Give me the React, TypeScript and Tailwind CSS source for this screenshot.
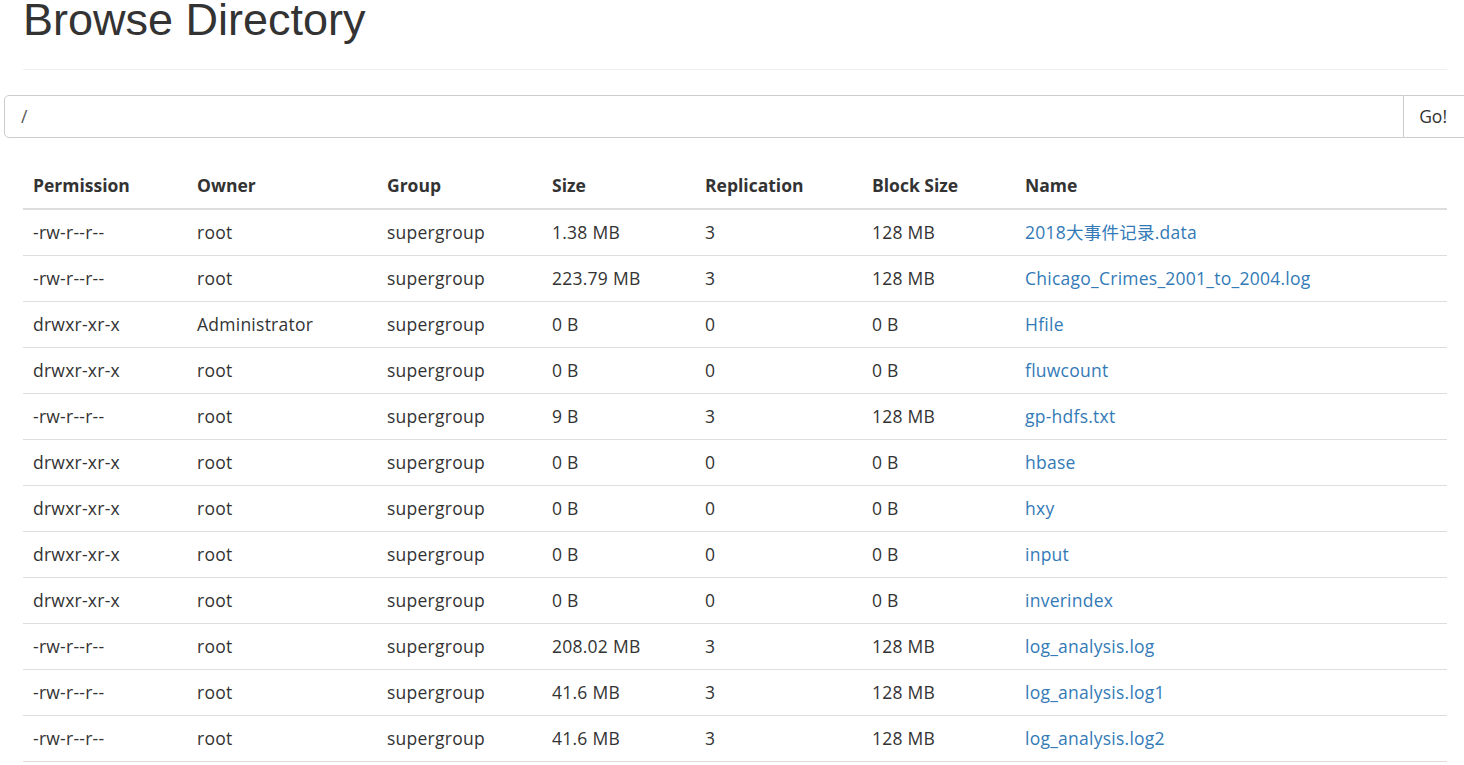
const rows = [
  ["-rw-r--r--", "root", "supergroup", "1.38 MB", "3", "128 MB", "2018大事件记录.data"],
  ["-rw-r--r--", "root", "supergroup", "223.79 MB", "3", "128 MB", "Chicago_Crimes_2001_to_2004.log"],
  ["drwxr-xr-x", "Administrator", "supergroup", "0 B", "0", "0 B", "Hfile"],
  ["drwxr-xr-x", "root", "supergroup", "0 B", "0", "0 B", "fluwcount"],
  ["-rw-r--r--", "root", "supergroup", "9 B", "3", "128 MB", "gp-hdfs.txt"],
  ["drwxr-xr-x", "root", "supergroup", "0 B", "0", "0 B", "hbase"],
  ["drwxr-xr-x", "root", "supergroup", "0 B", "0", "0 B", "hxy"],
  ["drwxr-xr-x", "root", "supergroup", "0 B", "0", "0 B", "input"],
  ["drwxr-xr-x", "root", "supergroup", "0 B", "0", "0 B", "inverindex"],
  ["-rw-r--r--", "root", "supergroup", "208.02 MB", "3", "128 MB", "log_analysis.log"],
  ["-rw-r--r--", "root", "supergroup", "41.6 MB", "3", "128 MB", "log_analysis.log1"],
  ["-rw-r--r--", "root", "supergroup", "41.6 MB", "3", "128 MB", "log_analysis.log2"],
];

const headers = ["Permission", "Owner", "Group", "Size", "Replication", "Block Size", "Name"];
const widths = ["w-[164px]", "w-[190px]", "w-[165px]", "w-[153px]", "w-[167px]", "w-[153px]", ""];

const App = () => {
  return (
    <div className="w-[1464px] h-[765px] overflow-hidden bg-white text-[#333] font-['Open_Sans','Noto_Sans_CJK_SC',sans-serif] text-[17.5px]">
      {/* page header */}
      <div className="flex flex-col ml-[23px] mr-[17px] border-b border-[#eee] h-[70px]">
        <h1 className="-mt-[5px] text-[45px] leading-[1.1] font-['Liberation_Sans',sans-serif] font-normal">
          Browse Directory
        </h1>
      </div>

      <div className="flex ml-[4px] w-[1461px] mt-[25px] h-[43px]">
        <input
          type="text"
          defaultValue="/"
          className="flex-1 border border-[#ccc] rounded-l-[5px] px-[16px] text-[17.5px] text-[#555] outline-none"
        />
        <button className="border border-[#ccc] border-l-0 pl-[15px] pr-[17px] text-[17.5px] bg-white text-[#333]">Go!</button>
      </div>

      <table className="ml-[23px] mt-[24px] w-[1424px] border-collapse table-fixed">
        <thead>
          <tr>
            {headers.map((h, i) => (
              <th key={h} className={`${widths[i]} text-left font-bold px-[10px] h-[47px] border-b-2 border-[#ddd]`}>
                {h}
              </th>
            ))}
          </tr>
        </thead>
        <tbody>
          {rows.map((r, i) => (
            <tr key={i} className="border-b border-[#ddd]">
              {r.map((c, j) => (
                <td key={j} className="px-[10px] h-[46px] tracking-[0.25px]">
                  {j === 6 ? <a href="#" className="text-[#337ab7]">{c}</a> : c}
                </td>
              ))}
            </tr>
          ))}
        </tbody>
      </table>
    </div>
  );
};

export default App;
